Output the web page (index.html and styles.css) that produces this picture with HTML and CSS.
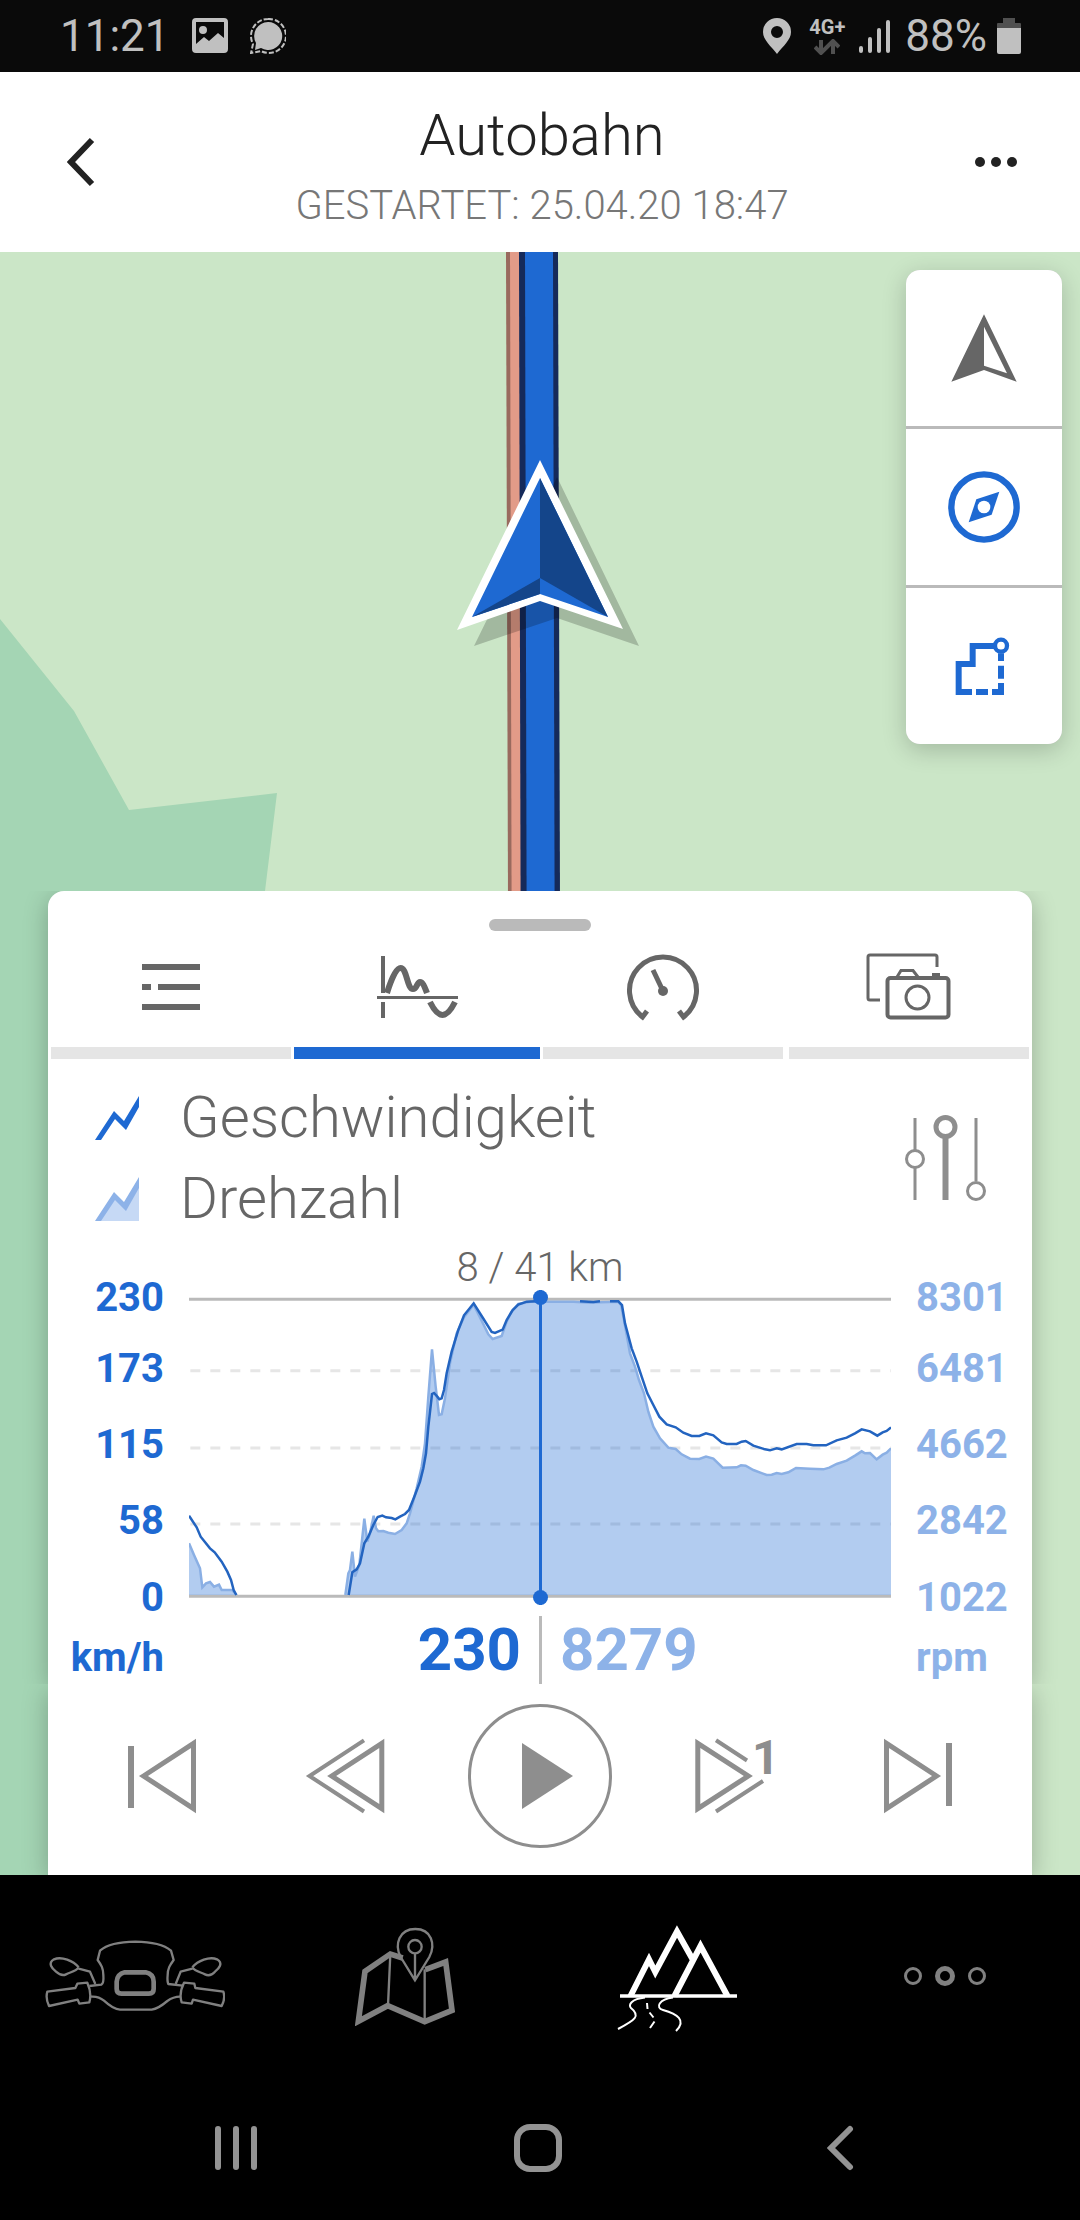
FILE: index.html
```html
<!DOCTYPE html>
<html lang="de">
<head>
<meta charset="utf-8">
<meta name="viewport" content="width=device-width, initial-scale=1">
<title>Autobahn</title>
<link rel="stylesheet" href="styles.css">
</head>
<body>

<div class="status">
  <div class="status-group status-left">
    <span class="status-text">11:21</span>
    <svg width="36" height="36" viewBox="0 0 36 36" fill="currentColor">
      <path fill-rule="evenodd" d="M4 0H32Q36 0 36 4V31Q36 35 32 35H4Q0 35 0 31V4Q0 0 4 0ZM4 4V26L12 19L17 23L26 15L32 20V4ZM11 8A4 4 0 1 1 11 16A4 4 0 1 1 11 8Z"/>
    </svg>
    <svg width="36" height="36" viewBox="0 0 36 36" fill="currentColor">
      <path d="M18 4A14 14 0 1 1 11 30L5 32L6 25A14 14 0 0 1 18 4Z"/>
      <path fill="none" stroke="currentColor" stroke-width="2" stroke-dasharray="5 2" d="M18 1A17 17 0 1 1 11 33L1 35L3 26A17 17 0 0 1 18 1Z"/>
    </svg>
  </div>
  <div class="status-group status-right">
    <svg width="28" height="36" viewBox="0 0 28 36" fill="currentColor">
      <path fill-rule="evenodd" d="M14 0A14 14 0 0 1 28 14C28 22 20 28 14 36C8 28 0 22 0 14A14 14 0 0 1 14 0ZM14 8A6 6 0 1 0 14 20A6 6 0 1 0 14 8Z"/>
    </svg>
    <div class="network">
      <span>4G+</span>
      <svg width="26" height="16" viewBox="0 0 26 16" fill="none" stroke="#505050" stroke-width="4">
        <path d="M7 1V14M1 8L7 14L13 8M19 15V2M13 8L19 2L25 8"/>
      </svg>
    </div>
    <svg width="32" height="36" viewBox="0 0 32 36" stroke="currentColor" stroke-width="4" stroke-linecap="round">
      <path d="M2 30V33M11 21V33M20 12V33M29 4V33"/>
    </svg>
    <div class="battery">
      <span class="status-text">88%</span>
      <svg width="24" height="36" viewBox="0 0 24 36">
        <path fill="#505050" d="M6 0H18V5H23Q24 5 24 6V10H0V6Q0 5 1 5H6Z"/>
        <path fill="currentColor" d="M0 10H24V34Q24 36 22 36H2Q0 36 0 34Z"/>
      </svg>
    </div>
  </div>
</div>

<header class="header">
  <button aria-label="Zurück">
    <svg width="28" height="50" viewBox="0 0 28 50" fill="none" stroke="#222" stroke-width="6"><path d="M25 3L4 25L25 47"/></svg>
  </button>
  <div class="header-titles">
    <h1>Autobahn</h1>
    <p>GESTARTET: 25.04.20 18:47</p>
  </div>
  <button class="more" aria-label="Mehr">
    <svg width="42" height="12" viewBox="0 0 42 12" fill="#222"><circle cx="5" cy="6" r="5"/><circle cx="21" cy="6" r="5"/><circle cx="37" cy="6" r="5"/></svg>
  </button>
</header>

<main class="map">
  <svg class="map-canvas" viewBox="0 0 1080 1623" preserveAspectRatio="xMidYMin slice" aria-hidden="true">
    <rect width="1080" height="1623" fill="#cbe6c7"/>
    <path fill="#a4d5b4" d="M0 367L74 459L129 558L277 541L265 639L200 1623H0Z"/>
    <path fill="#996a5e" d="M506 0H512L517 1623H511Z"/>
    <path fill="#e29b88" d="M510 0H520L525 1623H514Z"/>
    <path fill="#152a5a" d="M519 0H558L563 1623H523Z"/>
    <path fill="#1e69d2" d="M525 0H553L557 1623H529Z"/>
    <path fill="#000" fill-opacity=".2" d="M557 225L639 394L557 366L474 394Z"/>
    <path fill="#fff" d="M540 208L623 377L540 349L457 378Z"/>
    <path fill="#1e69d2" d="M540 226L608 365L540 342L472 365Z"/>
    <path fill="#14458a" d="M540 226L608 365L540 326ZM540 326V342L472 365Z"/>
  </svg>

  <div class="map-tools">
    <button aria-label="Position">
      <svg width="72" height="72" viewBox="204 186 216 216" fill="#666"><path fill-rule="evenodd" d="M312 193L410 395L312 360L214 395ZM312 230V347L381 370Z"/></svg>
    </button>
    <button aria-label="Kompass">
      <svg width="72" height="72" viewBox="204 663 216 216" fill="#1e69d2"><circle cx="312" cy="771" r="98" fill="none" stroke="#1e69d2" stroke-width="19"/><path d="M358 725L335 794L266 817L289 748Z"/><circle cx="312" cy="771" r="19" fill="#fff"/></svg>
    </button>
    <button aria-label="Route">
      <svg width="72" height="72" viewBox="204 1140 216 216" fill="none" stroke="#1e69d2" stroke-width="18"><path d="M342 1188H278V1242H236V1326H276M288 1326H324M336 1326H363V1299M363 1286V1247M363 1233V1210"/><circle cx="363" cy="1187" r="18" stroke-width="13"/></svg>
    </button>
  </div>

  <section class="sheet">
    <div class="handle"></div>
    <nav class="tabs">
      <button class="tab" aria-label="Liste">
        <svg width="96" height="72" viewBox="0 0 96 72" fill="#666"><path d="M19 13H77V19H19ZM19 33H28V39H19ZM35 33H77V39H35ZM19 53H77V59H19Z"/></svg>
      </button>
      <button class="tab active" aria-label="Diagramm">
        <svg width="96" height="72" viewBox="0 0 96 72" fill="none" stroke="#666"><path stroke-width="4" d="M14 5V42M14 51V67"/><path stroke-width="3" d="M8 46.500H89"/><path stroke-width="6" d="M18 42C22 29 27 17 31.500 17C38 17 38 38 44 38C48 38 48 31 51 31C54 31 56 37 58 42M61 51C65 59 69 64 73.500 64S82 59 86 51"/></svg>
      </button>
      <button class="tab" aria-label="Cockpit">
        <svg width="96" height="72" viewBox="0 0 96 72" fill="none" stroke="#666" stroke-width="5"><path d="M32 60L27.500 66A33.500 33.500 0 1 1 68.500 66L64 60M48 40L38 19"/><circle cx="48" cy="40" r="5" fill="#666" stroke="none"/></svg>
      </button>
      <button class="tab" aria-label="Fotos">
        <svg width="96" height="72" viewBox="0 0 96 72" fill="none" stroke="#666" stroke-width="3"><path d="M19 49H9Q7 49 7 47V6Q7 4 9 4H74Q76 4 76 6V16"/><rect x="26.500" y="27" width="61" height="39.500" rx="3" stroke-width="4"/><path d="M36 26L40 19.500H52L57 26"/><path d="M71 24H79" stroke-width="4"/><circle cx="56.500" cy="46.500" r="11.500"/></svg>
      </button>
    </nav>

    <div class="legend">
      <ul>
        <li>
          <svg width="44" height="44" viewBox="0 0 44 44"><path fill="#1e69d2" d="M0 44L19 15L29 25L44 0V11L31 34L20 23L6 44Z"/></svg>
          Geschwindigkeit
        </li>
        <li>
          <svg width="44" height="44" viewBox="0 0 44 44"><path fill="#c6d9f5" d="M5 44L20 22L31 33L44 10V44Z"/><path fill="#8db2e8" d="M0 44L19 15L29 25L44 0V11L31 34L20 23L6 44Z"/></svg>
          Drehzahl
        </li>
      </ul>
      <button aria-label="Einstellungen">
        <svg width="81" height="86" viewBox="0 0 81 86" fill="none" stroke="#8e8e8e" stroke-width="3"><path d="M10 3V35M10 53V85M71 3V66"/><circle cx="10" cy="44" r="8.500"/><circle cx="71" cy="76" r="8.500"/><path stroke-width="6" d="M40.500 23V85"/><circle cx="40.500" cy="12" r="9.500" stroke-width="5"/></svg>
      </button>
    </div>

    <div class="chart">
      <div class="axis axis-speed"><span>230</span><span>173</span><span>115</span><span>58</span><span>0</span><span>km/h</span></div>
      <div class="chart-body">
        <p class="distance">8 / 41 km</p>
        <div class="plot">
          <svg viewBox="447 186 2106 939" preserveAspectRatio="none" fill="none">
            <g stroke="#e6e6e6" stroke-width="3" stroke-dasharray="10 10"><path d="M451 422H2553M451 654H2553M451 882H2553"/></g>
            <path stroke="#bababa" stroke-width="3" d="M447 208H2553M447 1099H2553"/>
            <path fill="#1e69d2" fill-opacity=".34" d="M447 940L462 975L480 1015L487 1072L498 1060L510 1056L522 1070L537 1064L545 1080L576 1080L590 1095H447ZM916 1095L925 1030L930 1020L937 965L945 1040L958 1005L973 866L982 935L990 910L1001 857L1008 895L1015 904L1030 903L1045 908L1065 912L1085 900L1100 880L1110 850L1130 775L1145 710L1155 640L1165 500L1176 358L1187 470L1197 555L1205 553L1215 505L1230 400L1250 310L1272 262L1301 224L1320 262L1345 313L1358 327L1385 318L1400 275L1415 245L1435 222L1470 215L1500 213L1600 213L1650 218L1680 217L1735 214L1743 225L1752 270L1770 370L1785 410L1797 450L1812 490L1825 545L1840 590L1860 625L1885 653L1907 657L1925 673L1950 686L1978 687L1998 680L2020 686L2048 713L2090 712L2103 706L2117 707L2140 720L2180 735L2195 734L2210 729L2225 732L2245 727L2268 714L2310 716L2350 718L2368 713L2390 702L2420 692L2445 677L2465 664L2475 670L2490 669L2510 688L2528 674L2540 668L2553 655V1095Z"/>
            <path stroke="#8aafe4" stroke-width="2.500" d="M447 940L462 975L480 1015L487 1072L498 1060L510 1056L522 1070L537 1064L545 1080L576 1080L590 1095M916 1095L925 1030L930 1020L937 965L945 1040L958 1005L973 866L982 935L990 910L1001 857L1008 895L1015 904L1030 903L1045 908L1065 912L1085 900L1100 880L1110 850L1130 775L1145 710L1155 640L1165 500L1176 358L1187 470L1197 555L1205 553L1215 505L1230 400L1250 310L1272 262L1301 224L1320 262L1345 313L1358 327L1385 318L1400 275L1415 245L1435 222L1470 215L1500 215L1600 215L1650 218L1680 217L1735 215L1743 225L1752 270L1770 370L1785 410L1797 450L1812 490L1825 545L1840 590L1860 625L1885 653L1907 657L1925 673L1950 686L1978 687L1998 680L2020 686L2048 713L2090 712L2103 706L2117 707L2140 720L2180 735L2195 734L2210 729L2225 732L2245 727L2268 714L2310 716L2350 718L2368 713L2390 702L2420 692L2445 677L2465 664L2475 670L2490 669L2510 688L2528 674L2540 668L2553 655"/>
            <path stroke="#2364c0" stroke-width="2.500" d="M447 857L470 892L482 920L510 955L524 967L545 995L562 1025L573 1050L581 1080L589 1095M926 1095L937 1027L950 1018L960 1000L973 940L985 920L1000 885L1013 861L1027 857L1038 862L1055 864L1066 868L1080 860L1095 852L1107 840L1125 795L1140 755L1150 715L1158 670L1165 590L1176 492L1182 489L1192 500L1198 508L1205 505L1212 480L1220 430L1235 365L1255 300L1272 256L1301 220L1325 258L1355 306L1365 309L1388 299L1400 270L1418 240L1435 224L1460 215L1500 213M1620 214L1660 216L1680 214M1710 214L1735 214L1746 225L1755 280L1775 355L1790 395L1805 440L1822 490L1840 525L1858 560L1880 583L1907 592L1930 608L1955 618L1978 618L1998 610L2020 616L2045 637L2060 642L2090 642L2105 635L2117 633L2140 647L2175 658L2190 661L2210 655L2225 658L2270 642L2300 642L2320 646L2358 646L2390 631L2420 623L2445 610L2465 598L2490 604L2512 617L2528 607L2540 603L2553 592"/>
          </svg>
          <div class="cursor"></div>
        </div>
        <div class="readout"><strong>230</strong><strong>8279</strong></div>
      </div>
      <div class="axis axis-rpm"><span>8301</span><span>6481</span><span>4662</span><span>2842</span><span>1022</span><span>rpm</span></div>
    </div>
  </section>

  <section class="player">
    <div class="player-side">
      <button aria-label="Anfang">
        <svg width="68" height="76" viewBox="0 0 68 76" fill="none" stroke="#8e8e8e" stroke-width="5"><path stroke-width="6" d="M3 8V70"/><path d="M15.500 38L65.500 5.300V70.700Z"/></svg>
      </button>
      <button aria-label="Rückwärts">
        <svg width="80" height="76" viewBox="0 0 80 76" fill="none" stroke="#8e8e8e" stroke-width="5"><path stroke-width="4" d="M59 2.300L4.500 38L59 73.500"/><path d="M26.700 38L76.800 5.300V70.700Z"/></svg>
      </button>
    </div>
    <button aria-label="Abspielen">
      <svg width="144" height="144" viewBox="0 0 144 144"><circle cx="72" cy="72" r="70.500" fill="none" stroke="#8e8e8e" stroke-width="3"/><path fill="#8e8e8e" d="M54 39L105 72L54 105Z"/></svg>
    </button>
    <div class="player-side">
      <button aria-label="Vorwärts, Geschwindigkeit 1">
        <svg width="80" height="76" viewBox="0 0 80 76" fill="none" stroke="#8e8e8e" stroke-width="5"><path stroke-width="4" d="M21 2.300L52 22.500M21 73.500L68 43"/><path d="M2.800 5.300L53.300 38L2.800 70.700Z"/><text class="speed" x="57" y="36">1</text></svg>
      </button>
      <button aria-label="Ende">
        <svg width="68" height="76" viewBox="0 0 68 76" fill="none" stroke="#8e8e8e" stroke-width="5"><path stroke-width="6" d="M65 5V68"/><path d="M2.500 5.300L52.500 38L2.500 70.700Z"/></svg>
      </button>
    </div>
  </section>
</main>

<nav class="app-nav">
  <a href="#cockpit" aria-label="Cockpit">
    <svg width="180" height="108" viewBox="45 66 540 324" fill="none" stroke="currentColor" stroke-width="7" stroke-linejoin="round">
      <path d="M178 258L214 254Q222 250 220 225C220 205 214 195 203 180L210 152Q240 126 316 125Q392 126 423 152L431 180C420 195 413 205 413 225C412 235 412 245 415 252L458 257"/>
      <path d="M183 290Q205 288 222 302Q250 328 270 329H365Q385 326 412 303Q430 290 450 290"/>
      <path d="M146 202C130 183 95 168 72 178C52 190 66 205 78 215C88 224 98 228 108 223C122 216 138 214 146 202M146 206L180 215L196 252"/>
      <path d="M487 202C503 183 538 168 561 178C581 190 567 205 555 215C545 226 535 228 525 223C511 216 495 214 487 202M487 206L452 215L437 252"/>
      <path d="M136 264L52 275Q46 295 57 318L143 299L148 311L178 307Q186 280 172 248L142 251Z"/>
      <path d="M496 264L580 275Q587 295 575 318L489 299L485 311L455 307Q446 280 462 248L493 251Z"/>
      <path stroke-width="14" d="M284 217H347Q371 222 371 245V267Q371 281 357 281H274Q260 281 260 267V245Q262 222 284 217Z"/>
    </svg>
  </a>
  <a href="#karte" aria-label="Karte">
    <svg width="100" height="100" viewBox="975 75 300 300" fill="none" stroke="currentColor" stroke-width="7">
      <path stroke-width="17" d="M1118 171L1081 159L1005 211L985 361L1073 314L1184 362L1266 328L1247 183L1186 206"/>
      <path d="M1081 159L1074 314M1184 205V362M1155 238L1112 168C1092 130 1108 84 1156 84C1204 84 1218 130 1198 168ZM1155 157V236"/>
      <circle cx="1155" cy="137" r="20"/>
    </svg>
  </a>
  <a class="current" href="#touren" aria-label="Touren">
    <svg width="124" height="112" viewBox="0 -2 124 112" fill="none" stroke="currentColor" stroke-width="6">
      <path d="M17.500 74L36 37.500L42.300 50L64 9.500L80 38M61.500 74L87.500 24L114.500 74"/>
      <path stroke-width="3.500" d="M7 74H124"/>
      <path stroke-width="2" d="M32 75.500C18 77 15 83 18 86C28 94 22 98 5 107M60 75.500C46 77 42 86 50 88C64 92 74 98 63 109M34 81L34.500 87M36.500 90.500L40.500 95.500M41.500 99.500L37 106"/>
    </svg>
  </a>
  <a href="#mehr" aria-label="Mehr">
    <svg width="84" height="24" viewBox="0 0 84 24" fill="none" stroke="currentColor" stroke-width="3"><circle cx="10" cy="12" r="7.500"/><circle cx="42" cy="12" r="7.500" stroke-width="5"/><circle cx="74" cy="12" r="7.500"/></svg>
  </a>
</nav>

<nav class="system-nav">
  <button aria-label="Letzte Apps"><svg width="42" height="48" viewBox="0 0 42 48" stroke="#939393" stroke-width="6" stroke-linecap="round"><path d="M3 5V43M21 5V43M39 5V43"/></svg></button>
  <button aria-label="Startseite"><svg width="48" height="48" viewBox="0 0 48 48" fill="none" stroke="#939393" stroke-width="6"><rect x="3" y="3" width="42" height="42" rx="13"/></svg></button>
  <button aria-label="Zurück"><svg width="27" height="48" viewBox="0 0 27 48" fill="none" stroke="#939393" stroke-width="6" stroke-linecap="round"><path d="M23 5L4 24L23 43"/></svg></button>
</nav>

</body>
</html>
```
FILE: styles.css
```css
* {
  box-sizing: border-box;
}

body {
  margin: 0;
  min-height: 100vh;
  display: flex;
  flex-direction: column;
  background: #000;
  font-family: Roboto, "Noto Sans", sans-serif;
}

h1,
p,
ul {
  margin: 0;
  padding: 0;
  font-weight: 300;
}

button {
  padding: 0;
  border: 0;
  background: none;
  font: inherit;
}

svg {
  display: block;
  flex: none;
}

/* Status bar */

.status {
  display: flex;
  justify-content: space-between;
  padding: 0 59px 0 60px;
  height: 72px;
  background: #0a0a0a;
  color: #c0c0c0;
}

.status-group,
.battery {
  display: flex;
  align-items: center;
}

.status-left {
  gap: 22px;
}

.status-right {
  gap: 14px;
}

.battery {
  gap: 10px;
}

.status-text {
  font-size: 44px;
  line-height: 72px;
}

.network {
  display: flex;
  flex-direction: column;
  align-items: center;
  gap: 2px;
  margin-left: 4px;
  font-size: 20px;
  font-weight: 700;
  line-height: 20px;
}

/* Header */

.header {
  display: grid;
  grid-template-columns: 1fr auto 1fr;
  align-items: center;
  padding: 24px 63px 14px 67px;
  height: 180px;
  background: #fff;
}

.header-titles {
  text-align: center;
}

.header button {
  justify-self: start;
  padding-bottom: 10px;
}

.header .more {
  justify-self: end;
}

.header h1 {
  color: #222;
  font-size: 58px;
  line-height: 78px;
}

.header p {
  color: #777;
  font-size: 40px;
  line-height: 64px;
}

/* Map */

.map {
  position: relative;
  flex: 1;
  display: flex;
  flex-direction: column;
  overflow: hidden;
}

.map-canvas {
  position: absolute;
  inset: 0;
  width: 100%;
  height: 100%;
}

.map-tools {
  position: relative;
  align-self: flex-end;
  display: flex;
  flex-direction: column;
  gap: 3px;
  margin: 18px;
  border-radius: 14px;
  background: #bababa;
  box-shadow: 0 6px 24px rgba(0, 0, 0, .2);
  overflow: hidden;
}

.map-tools button {
  display: grid;
  place-items: center;
  width: 156px;
  height: 156px;
  background: #fff;
}

.sheet,
.player {
  position: relative;
  margin: 0 48px;
  background: #fff;
  box-shadow: 0 6px 24px rgba(0, 0, 0, .25);
  clip-path: inset(0 -48px);
}

.sheet {
  margin-top: auto;
  padding-top: 28px;
  border-radius: 16px 16px 0 0;
}

.handle {
  width: 102px;
  height: 12px;
  margin: 0 auto;
  border-radius: 6px;
  background: #bababa;
}

.tabs {
  display: grid;
  grid-template-columns: repeat(4, 1fr);
}

.tab {
  display: flex;
  flex-direction: column;
  align-items: center;
  padding: 20px 3px 0;
  gap: 24px;
}

.tab::after {
  content: "";
  align-self: stretch;
  height: 12px;
  background: #e5e5e5;
}

.tab.active {
  padding: 20px 0 0;
}

.tab.active::after {
  background: #1e69d2;
}

/* Legend */

.legend {
  display: flex;
  align-items: center;
  justify-content: space-between;
  padding: 18px 46px 5px 47px;
}

.legend li {
  display: flex;
  align-items: center;
  gap: 41px;
  color: #666;
  font-size: 58px;
  line-height: 81px;
}

/* Chart */

.chart {
  display: grid;
  grid-template-columns: 141px 1fr 141px;
}

.axis {
  display: grid;
  grid-template-rows: 74px 71px 76px 76px 77px 60px;
  align-items: end;
  align-content: start;
  font-size: 40px;
  font-weight: 700;
  line-height: 40px;
}

.axis-speed {
  padding-right: 25px;
  color: #1e69d2;
  text-align: right;
}

.axis-rpm {
  padding-left: 25px;
  color: #8db2e8;
}

.distance {
  color: #666;
  font-size: 40px;
  line-height: 48px;
  text-align: center;
}

.plot {
  position: relative;
}

.plot svg {
  width: 100%;
  height: 313px;
}

.plot path {
  vector-effect: non-scaling-stroke;
}

.cursor {
  position: absolute;
  top: -2px;
  bottom: 0;
  left: 50%;
  width: 3px;
  margin-left: -1px;
  background: #1e69d2;
}

.cursor::before,
.cursor::after {
  content: "";
  position: absolute;
  left: -6px;
  width: 15px;
  height: 15px;
  border-radius: 50%;
  background: #1e69d2;
}

.cursor::before {
  top: 0;
}

.cursor::after {
  bottom: 0;
}

.readout {
  display: grid;
  grid-template-columns: 1fr 1fr;
  margin-top: 11px;
  font-size: 60px;
  line-height: 68px;
}

.readout strong:first-child {
  padding-right: 18px;
  border-right: 3px solid #bababa;
  margin-right: -2px;
  color: #1e69d2;
  text-align: right;
}

.readout strong:last-child {
  padding-left: 20px;
  color: #8db2e8;
}

/* Player */

.player {
  display: grid;
  grid-template-columns: 1fr 144px 1fr;
  gap: 83px;
  align-items: center;
  padding: 20px 80px 27px;
}

.player-side {
  display: flex;
  justify-content: space-between;
}

.speed {
  fill: #8e8e8e;
  stroke: none;
  font-size: 48px;
  font-weight: 700;
}

/* Bottom bars */

.app-nav {
  display: grid;
  grid-template-columns: repeat(4, 1fr);
  height: 201px;
}

.app-nav a {
  display: grid;
  place-items: center;
  color: #808080;
}

.app-nav .current {
  color: #fff;
}

.system-nav {
  display: grid;
  grid-template-columns: repeat(3, 1fr);
  height: 144px;
  padding: 0 89px 0 85px;
}

.system-nav button {
  display: grid;
  place-items: center;
}
```
